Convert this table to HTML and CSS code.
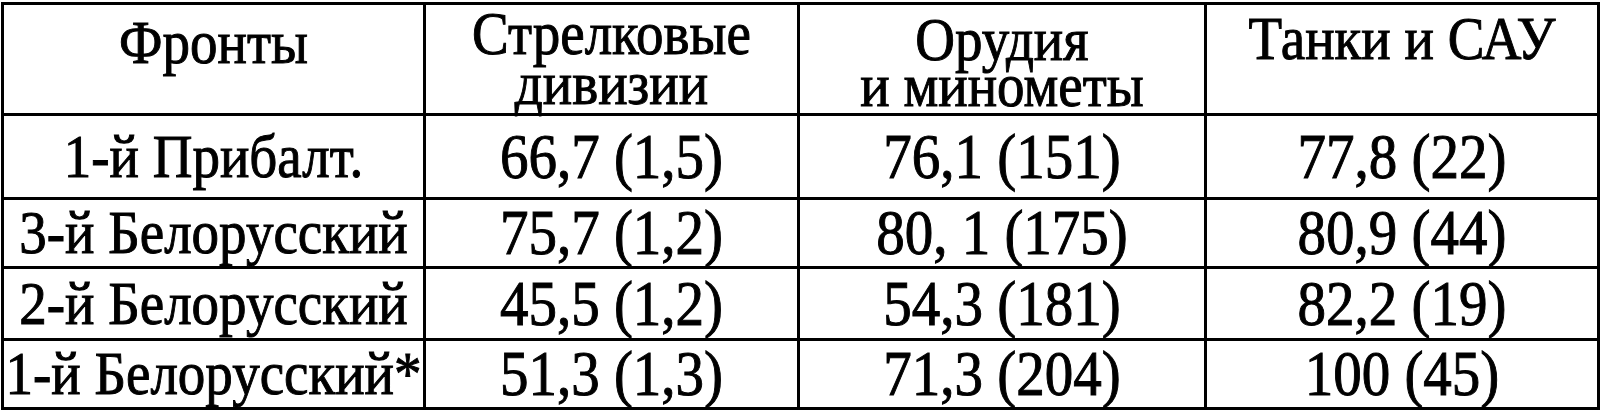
FILE: index.html
```html
<!DOCTYPE html>
<html lang="ru">
<head>
<meta charset="utf-8">
<title>Фронты</title>
<link rel="stylesheet" href="styles.css">
</head>
<body>
<div class="tbl">
  <div class="c h h1"><span class="t">Фронты</span></div>
  <div class="c h h2"><span class="t"><span class="ln">Стрелковые</span><span class="ln">дивизии</span></span></div>
  <div class="c h h3"><span class="t"><span class="ln">Орудия</span><span class="ln">и минометы</span></span></div>
  <div class="c h h4"><span class="t">Танки и САУ</span></div>

  <div class="c name"><span class="t">1-й Прибалт.</span></div>
  <div class="c"><span class="t">66,7 (1,5)</span></div>
  <div class="c"><span class="t">76,1 (151)</span></div>
  <div class="c"><span class="t">77,8 (22)</span></div>

  <div class="c name"><span class="t">3-й Белорусский</span></div>
  <div class="c"><span class="t">75,7 (1,2)</span></div>
  <div class="c"><span class="t">80, 1 (175)</span></div>
  <div class="c"><span class="t">80,9 (44)</span></div>

  <div class="c name"><span class="t">2-й Белорусский</span></div>
  <div class="c"><span class="t">45,5 (1,2)</span></div>
  <div class="c"><span class="t">54,3 (181)</span></div>
  <div class="c"><span class="t">82,2 (19)</span></div>

  <div class="c name"><span class="t">1-й Белорусский*</span></div>
  <div class="c"><span class="t">51,3 (1,3)</span></div>
  <div class="c"><span class="t">71,3 (204)</span></div>
  <div class="c"><span class="t">100 (45)</span></div>
</div>
</body>
</html>
```

FILE: styles.css
```css
html, body {
  margin: 0;
  padding: 0;
  background: #fff;
}

.tbl {
  display: grid;
  grid-template-columns: 419px 371px 404px 390px;
  grid-template-rows: 108px 81px 66px 69px 66px;
  gap: 3px;
  padding: 3px;
  background: #000;
  margin: 2px 0 0 1px;
  width: max-content;
}

.c {
  background: #fff;
  display: flex;
  justify-content: center;
  align-items: center;
  font-family: "Liberation Serif", "Times New Roman", serif;
  font-size: 57px;
  color: #000;
  -webkit-text-stroke: 0.9px #000;
}

.name {
  font-size: 55px;
}

.t {
  display: inline-block;
  line-height: 37.5px;
  transform: scaleY(1.12);
  white-space: nowrap;
  text-align: center;
}

.h {
  align-items: flex-start;
  font-size: 55px;
}

.h .t {
  line-height: 39px;
  transform-origin: top center;
}

.ln {
  display: block;
}

.h1 { padding-top: 15px; }
.h2 { padding-top: 3px; }
.h2 .t { line-height: 45px; }
.h3 { padding-top: 11px; }
.h3 .t { line-height: 41px; }
.h4 { padding-top: 11px; }
```
